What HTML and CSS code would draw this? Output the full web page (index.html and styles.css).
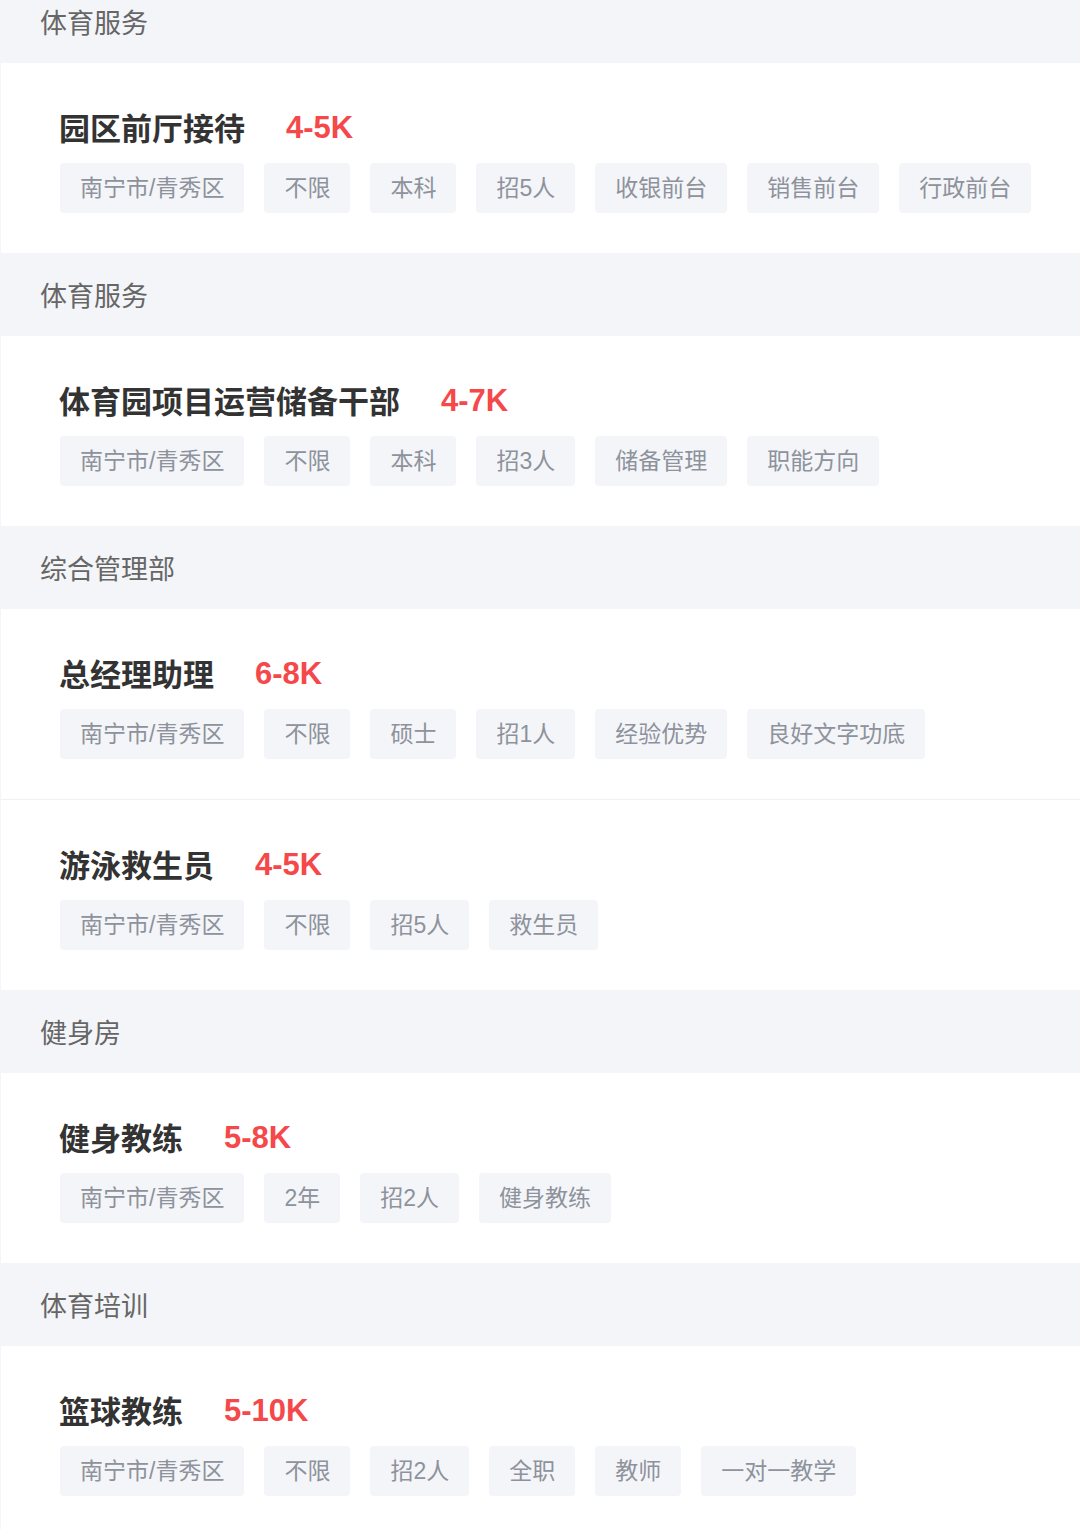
FILE: index.html
```html
<!DOCTYPE html>
<html lang="zh-CN">
<head>
    <meta charset="UTF-8">
    <meta name="viewport" content="width=device-width, initial-scale=1.0">
    <title>职位列表</title>
    <link rel="stylesheet" href="styles.css">
</head>
<body>
    <div id="page">
        <div class="dept">体育服务</div>
        <div class="job">
            <div class="job-head"><span class="job-name">园区前厅接待</span><span class="salary">4-5K</span></div>
            <div class="tags">
                <span class="tag">南宁市/青秀区</span><span class="tag">不限</span><span class="tag">本科</span><span class="tag">招5人</span><span class="tag">收银前台</span><span class="tag">销售前台</span><span class="tag">行政前台</span>
            </div>
        </div>

        <div class="dept">体育服务</div>
        <div class="job">
            <div class="job-head"><span class="job-name">体育园项目运营储备干部</span><span class="salary">4-7K</span></div>
            <div class="tags">
                <span class="tag">南宁市/青秀区</span><span class="tag">不限</span><span class="tag">本科</span><span class="tag">招3人</span><span class="tag">储备管理</span><span class="tag">职能方向</span>
            </div>
        </div>

        <div class="dept">综合管理部</div>
        <div class="job">
            <div class="job-head"><span class="job-name">总经理助理</span><span class="salary">6-8K</span></div>
            <div class="tags">
                <span class="tag">南宁市/青秀区</span><span class="tag">不限</span><span class="tag">硕士</span><span class="tag">招1人</span><span class="tag">经验优势</span><span class="tag">良好文字功底</span>
            </div>
        </div>
        <div class="job">
            <div class="job-head"><span class="job-name">游泳救生员</span><span class="salary">4-5K</span></div>
            <div class="tags">
                <span class="tag">南宁市/青秀区</span><span class="tag">不限</span><span class="tag">招5人</span><span class="tag">救生员</span>
            </div>
        </div>

        <div class="dept">健身房</div>
        <div class="job">
            <div class="job-head"><span class="job-name">健身教练</span><span class="salary">5-8K</span></div>
            <div class="tags">
                <span class="tag">南宁市/青秀区</span><span class="tag">2年</span><span class="tag">招2人</span><span class="tag">健身教练</span>
            </div>
        </div>

        <div class="dept">体育培训</div>
        <div class="job">
            <div class="job-head"><span class="job-name">篮球教练</span><span class="salary">5-10K</span></div>
            <div class="tags">
                <span class="tag">南宁市/青秀区</span><span class="tag">不限</span><span class="tag">招2人</span><span class="tag">全职</span><span class="tag">教师</span><span class="tag">一对一教学</span>
            </div>
        </div>
    </div>
</body>
</html>
```

FILE: styles.css
```css
html,body{
    margin: 0;
    padding: 0;
    background: #f4f5f8;
}
body{
    font-family: "Noto Sans CJK SC", "Noto Sans", sans-serif;
    height: 1529px;
    overflow: hidden;
}
#page{
    margin-top: -20px;
}
.dept{
    height: 83px;
    line-height: 83px;
    padding-left: 40px;
    font-size: 27px;
    color: #666;
    background: #f4f5f8;
}
.job{
    background: #fff;
    margin-left: 1px;
    padding: 45px 0 40px 58px;
    height: 105px;
}
.job + .job{
    border-top: 1px solid #f0f1f3;
}
.job-head{
    display: flex;
    align-items: center;
    gap: 41px;
    height: 40px;
}
.job-name{
    font-size: 31px;
    font-weight: bold;
    color: #333;
    margin-top: -3px;
}
.salary{
    font-family: "Liberation Sans", Arial, sans-serif;
    font-size: 31px;
    font-weight: bold;
    color: #f5484b;
}
.tags{
    display: flex;
    gap: 20px;
    margin-top: 15px;
    padding-left: 1px;
}
.tag{
    height: 50px;
    line-height: 50px;
    padding: 0 20px;
    font-family: "Liberation Sans", "Noto Sans CJK SC", sans-serif;
    font-size: 23px;
    color: #8d929c;
    background: #f4f5f8;
    border-radius: 4px;
}
```
